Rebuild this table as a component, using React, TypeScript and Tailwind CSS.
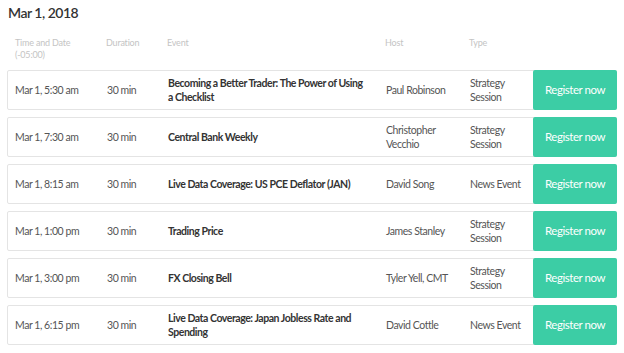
import React from "react";

const rows = [
  { t: "Mar 1, 5:30 am", e: "Becoming a Better Trader: The Power of Using a Checklist", h: "Paul Robinson", ty: "Strategy Session" },
  { t: "Mar 1, 7:30 am", e: "Central Bank Weekly", h: "Christopher Vecchio", ty: "Strategy Session" },
  { t: "Mar 1, 8:15 am", e: "Live Data Coverage: US PCE Deflator (JAN)", h: "David Song", ty: "News Event" },
  { t: "Mar 1, 1:00 pm", e: "Trading Price", h: "James Stanley", ty: "Strategy Session" },
  { t: "Mar 1, 3:00 pm", e: "FX Closing Bell", h: "Tyler Yell, CMT", ty: "Strategy Session" },
  { t: "Mar 1, 6:15 pm", e: "Live Data Coverage: Japan Jobless Rate and Spending", h: "David Cottle", ty: "News Event" },
];

export default function App() {
  return (
    <div className="w-[624px] h-[353px] bg-white overflow-hidden" style={{ fontFamily: "Lato, 'Open Sans', sans-serif" }}>
      <div className="pl-[8px] pt-[3px] text-[14px] leading-[20px] font-semibold tracking-[-0.5px] text-[#333]">Mar 1, 2018</div>
      <div className="flex pl-[15px] pt-[14px] h-[47px] text-[9px] leading-[12px] tracking-[-0.2px] text-[#c4c4c4]">
        <div className="w-[91px]">Time and Date<br />(-05:00)</div>
        <div className="w-[61px]">Duration</div>
        <div className="w-[218px]">Event</div>
        <div className="w-[84px]">Host</div>
        <div className="w-[64px]">Type</div>
      </div>
      <div className="flex flex-col gap-[7.5px] px-[7px]">
        {rows.map((r, i) => (
          <div key={i} className="flex h-[39.5px] items-stretch border border-[#e4e4e4] rounded-[2px] text-[10.5px] leading-[14px] tracking-[-0.45px] text-[#555]">
            <div className="w-[99px] pl-[7px] flex items-center">{r.t}</div>
            <div className="w-[61px] flex items-center">30 min</div>
            <div className="w-[218px] pr-[20px] flex items-center font-bold text-[#333]">{r.e}</div>
            <div className="w-[84px] pr-[6px] flex items-center">{r.h}</div>
            <div className="w-[63px] pr-[4px] flex items-center">{r.ty}</div>
            <div className="flex-1 -my-px -mr-px bg-[#3ccda5] rounded-[2px] flex items-center justify-center text-white text-[11.5px]">Register now</div>
          </div>
        ))}
      </div>
    </div>
  );
}
